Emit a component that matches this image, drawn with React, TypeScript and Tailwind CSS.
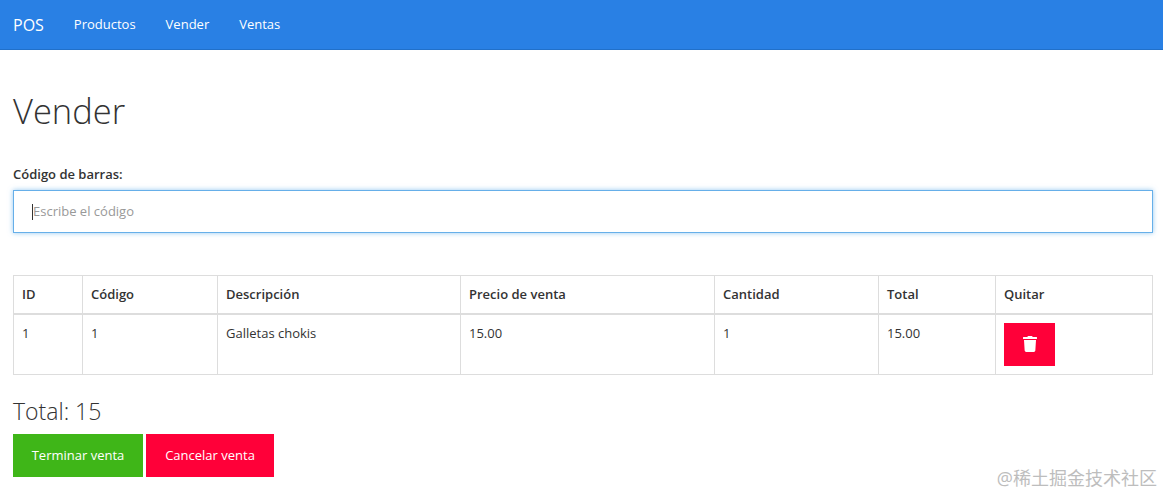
import { FaTrash } from "react-icons/fa";

const links = ["Productos", "Vender", "Ventas"];

const columns = [
  { label: "ID", width: "w-[69px]" },
  { label: "Código", width: "w-[135px]" },
  { label: "Descripción", width: "w-[243px]" },
  { label: "Precio de venta", width: "w-[254px]" },
  { label: "Cantidad", width: "w-[164px]" },
  { label: "Total", width: "w-[117px]" },
  { label: "Quitar", width: "w-[157px]" },
];

const cell = ["1", "1", "Galletas chokis", "15.00", "1", "15.00"];

export default function App() {
  return (
    <div className="relative h-[495px] overflow-hidden bg-white font-['Open_Sans','Noto_Sans_CJK_SC',sans-serif] text-[13px] text-[#333]">
      <nav className="flex h-[50px] items-center border-b border-[#2170c9] bg-[#2980e4] pl-[13px] text-white">
        <span className="mr-[30px] text-[16px]">POS</span>
        <div className="flex gap-[30px] font-medium">
          {links.map((link) => (
            <span key={link}>{link}</span>
          ))}
        </div>
      </nav>

      <main className="px-[13px]">
        <h1 className="mt-[37px] text-[34.5px] leading-[48px] font-light text-[#333]">Vender</h1>

        <label className="mt-[30px] block leading-[18px] font-semibold">Código de barras:</label>
        <div className="mt-[7px] flex h-[43px] w-[1140px] items-center border border-[#66afe9] pl-[18px] shadow-[0_0_5px_rgba(102,175,233,0.7)]">
          <span className="h-[16px] w-px bg-[#333]" />
          <span className="text-[#999]">Escribe el código</span>
        </div>

        <table className="mt-[42px] w-[1139px] table-fixed border-collapse">
          <thead>
            <tr>
              {columns.map((col) => (
                <th
                  key={col.label}
                  className={`${col.width} h-[38px] border border-b-2 border-[#ddd] px-[8px] text-left font-semibold`}
                >
                  {col.label}
                </th>
              ))}
            </tr>
          </thead>
          <tbody>
            <tr>
              {cell.map((value, i) => (
                <td key={i} className="h-[61px] border border-[#ddd] px-[8px] pt-[9px] align-top">
                  {value}
                </td>
              ))}
              <td className="border border-[#ddd] px-[8px] pt-[8px] align-top">
                <button className="flex h-[43px] w-[51px] items-center justify-center bg-[#ff0039] text-white">
                  <FaTrash className="h-[16px] w-[14px]" />
                </button>
              </td>
            </tr>
          </tbody>
        </table>

        <h3 className="mt-[21px] text-[23px] leading-[30px] font-light">Total: 15</h3>

        <div className="mt-[8px] flex gap-[3px]">
          <button className="h-[43px] w-[130px] bg-[#3fb618] text-white">Terminar venta</button>
          <button className="h-[43px] w-[128px] bg-[#ff0039] text-white">Cancelar venta</button>
        </div>
      </main>

      <span className="absolute top-[465px] right-[6px] text-[18px] text-[#bdbdbd]">@稀土掘金技术社区</span>
    </div>
  );
}
